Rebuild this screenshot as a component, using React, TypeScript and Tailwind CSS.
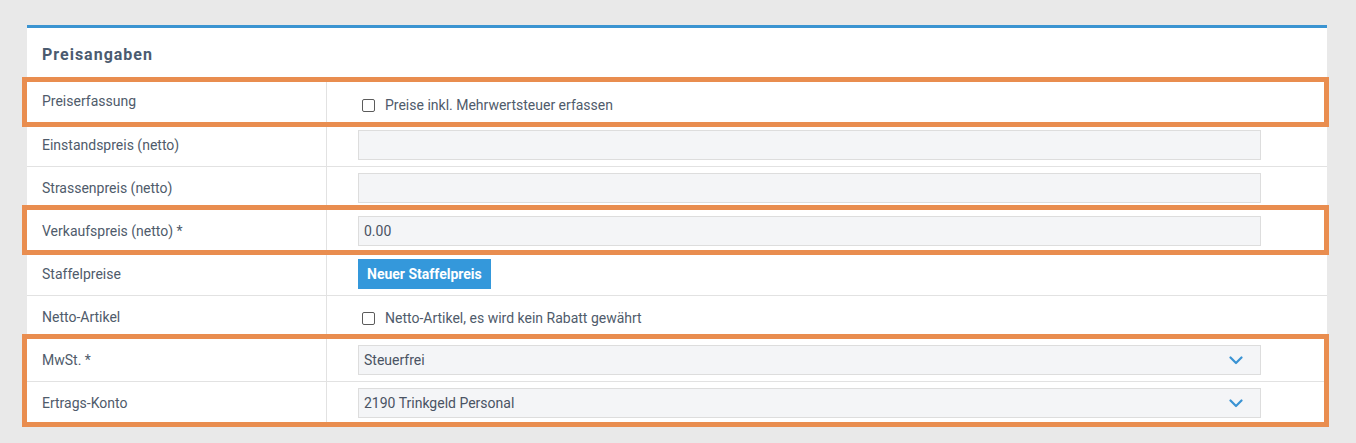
import React from "react";

const font = { fontFamily: "Roboto, 'Noto Sans', Arial, sans-serif" };

function Label({ children }: { children: React.ReactNode }) {
  return (
    <div className="flex items-center pl-[15px] text-[14px] text-[#4f5b6b] border-r border-[#e2e2e2]">
      {children}
    </div>
  );
}

function Row({ label, children, first }: { label: string; children: React.ReactNode; first?: boolean }) {
  return (
    <div className={`grid grid-cols-[300px_1fr] h-[43px] ${first ? "" : "border-t border-[#e2e2e2]"}`}>
      <Label>{label}</Label>
      <div className="flex items-center pl-[31px] pr-[66px]">{children}</div>
    </div>
  );
}

function Checkbox({ text, pt }: { text: string; pt: string }) {
  return (
    <div className={`flex items-center pl-[4px] ${pt}`}>
      <span className="w-[13px] h-[13px] rounded-[2px] border-[1.5px] border-[#5b5b5b] bg-white" />
      <span className="ml-[10px] text-[14px] text-[#4f5b6b]">{text}</span>
    </div>
  );
}

function Input({ value }: { value?: string }) {
  return (
    <div className="w-full h-[30px] bg-[#f4f5f7] border border-[#dddddd] flex items-center px-[5px] text-[14px] text-[#4a5363]">
      {value}
    </div>
  );
}

function Select({ value }: { value: string }) {
  return (
    <div className="w-full h-[30px] bg-[#f4f5f7] border border-[#dddddd] flex items-center justify-between pl-[5px] pr-[17px] text-[14px] text-[#4a5363]">
      <span>{value}</span>
      <svg width="14" height="9" viewBox="0 0 14 9" fill="none">
        <path d="M1.5 1.5 L7 7 L12.5 1.5" stroke="#3a93d3" strokeWidth="2.2" strokeLinecap="round" strokeLinejoin="round" />
      </svg>
    </div>
  );
}

function Highlight({ top, bottom }: { top: number; bottom: number }) {
  return (
    <div
      className="absolute pointer-events-none border-[5px] border-[#e98d4f] left-[-5px] right-[-2px]"
      style={{ top, bottom }}
    />
  );
}

export default function App() {
  return (
    <div className="min-h-[443px] bg-[#e9e9e9] pt-[25px] pl-[27px] pr-[29px]" style={font}>
      <div className="bg-white border-t-[3px] border-[#3b94d1]">
        <div className="h-[52px] flex items-center pl-[15px] pt-[2px]">
          <span className="text-[16px] font-bold tracking-[1px] text-[#4b5b70]">Preisangaben</span>
        </div>
        <div className="relative">
          <Row label="Preiserfassung" first>
            <Checkbox text="Preise inkl. Mehrwertsteuer erfassen" pt="pt-[7px]" />
          </Row>
          <Highlight top={-3} bottom={-4} />
        </div>
        <Row label="Einstandspreis (netto)">
          <Input />
        </Row>
        <Row label="Strassenpreis (netto)">
          <Input />
        </Row>
        <div className="relative">
          <Row label="Verkaufspreis (netto) *">
            <Input value="0.00" />
          </Row>
          <Highlight top={-4} bottom={-3} />
        </div>
        <Row label="Staffelpreise">
          <button className="h-[30px] px-[9px] bg-[#3498db] text-white text-[14px] font-bold">
            Neuer Staffelpreis
          </button>
        </Row>
        <Row label="Netto-Artikel">
          <Checkbox text="Netto-Artikel, es wird kein Rabatt gewährt" pt="pt-[3px]" />
        </Row>
        <div className="relative">
          <Row label="MwSt. *">
            <Select value="Steuerfrei" />
          </Row>
          <Row label="Ertrags-Konto">
            <Select value="2190 Trinkgeld Personal" />
          </Row>
          <Highlight top={-4} bottom={-3} />
        </div>
      </div>
    </div>
  );
}
